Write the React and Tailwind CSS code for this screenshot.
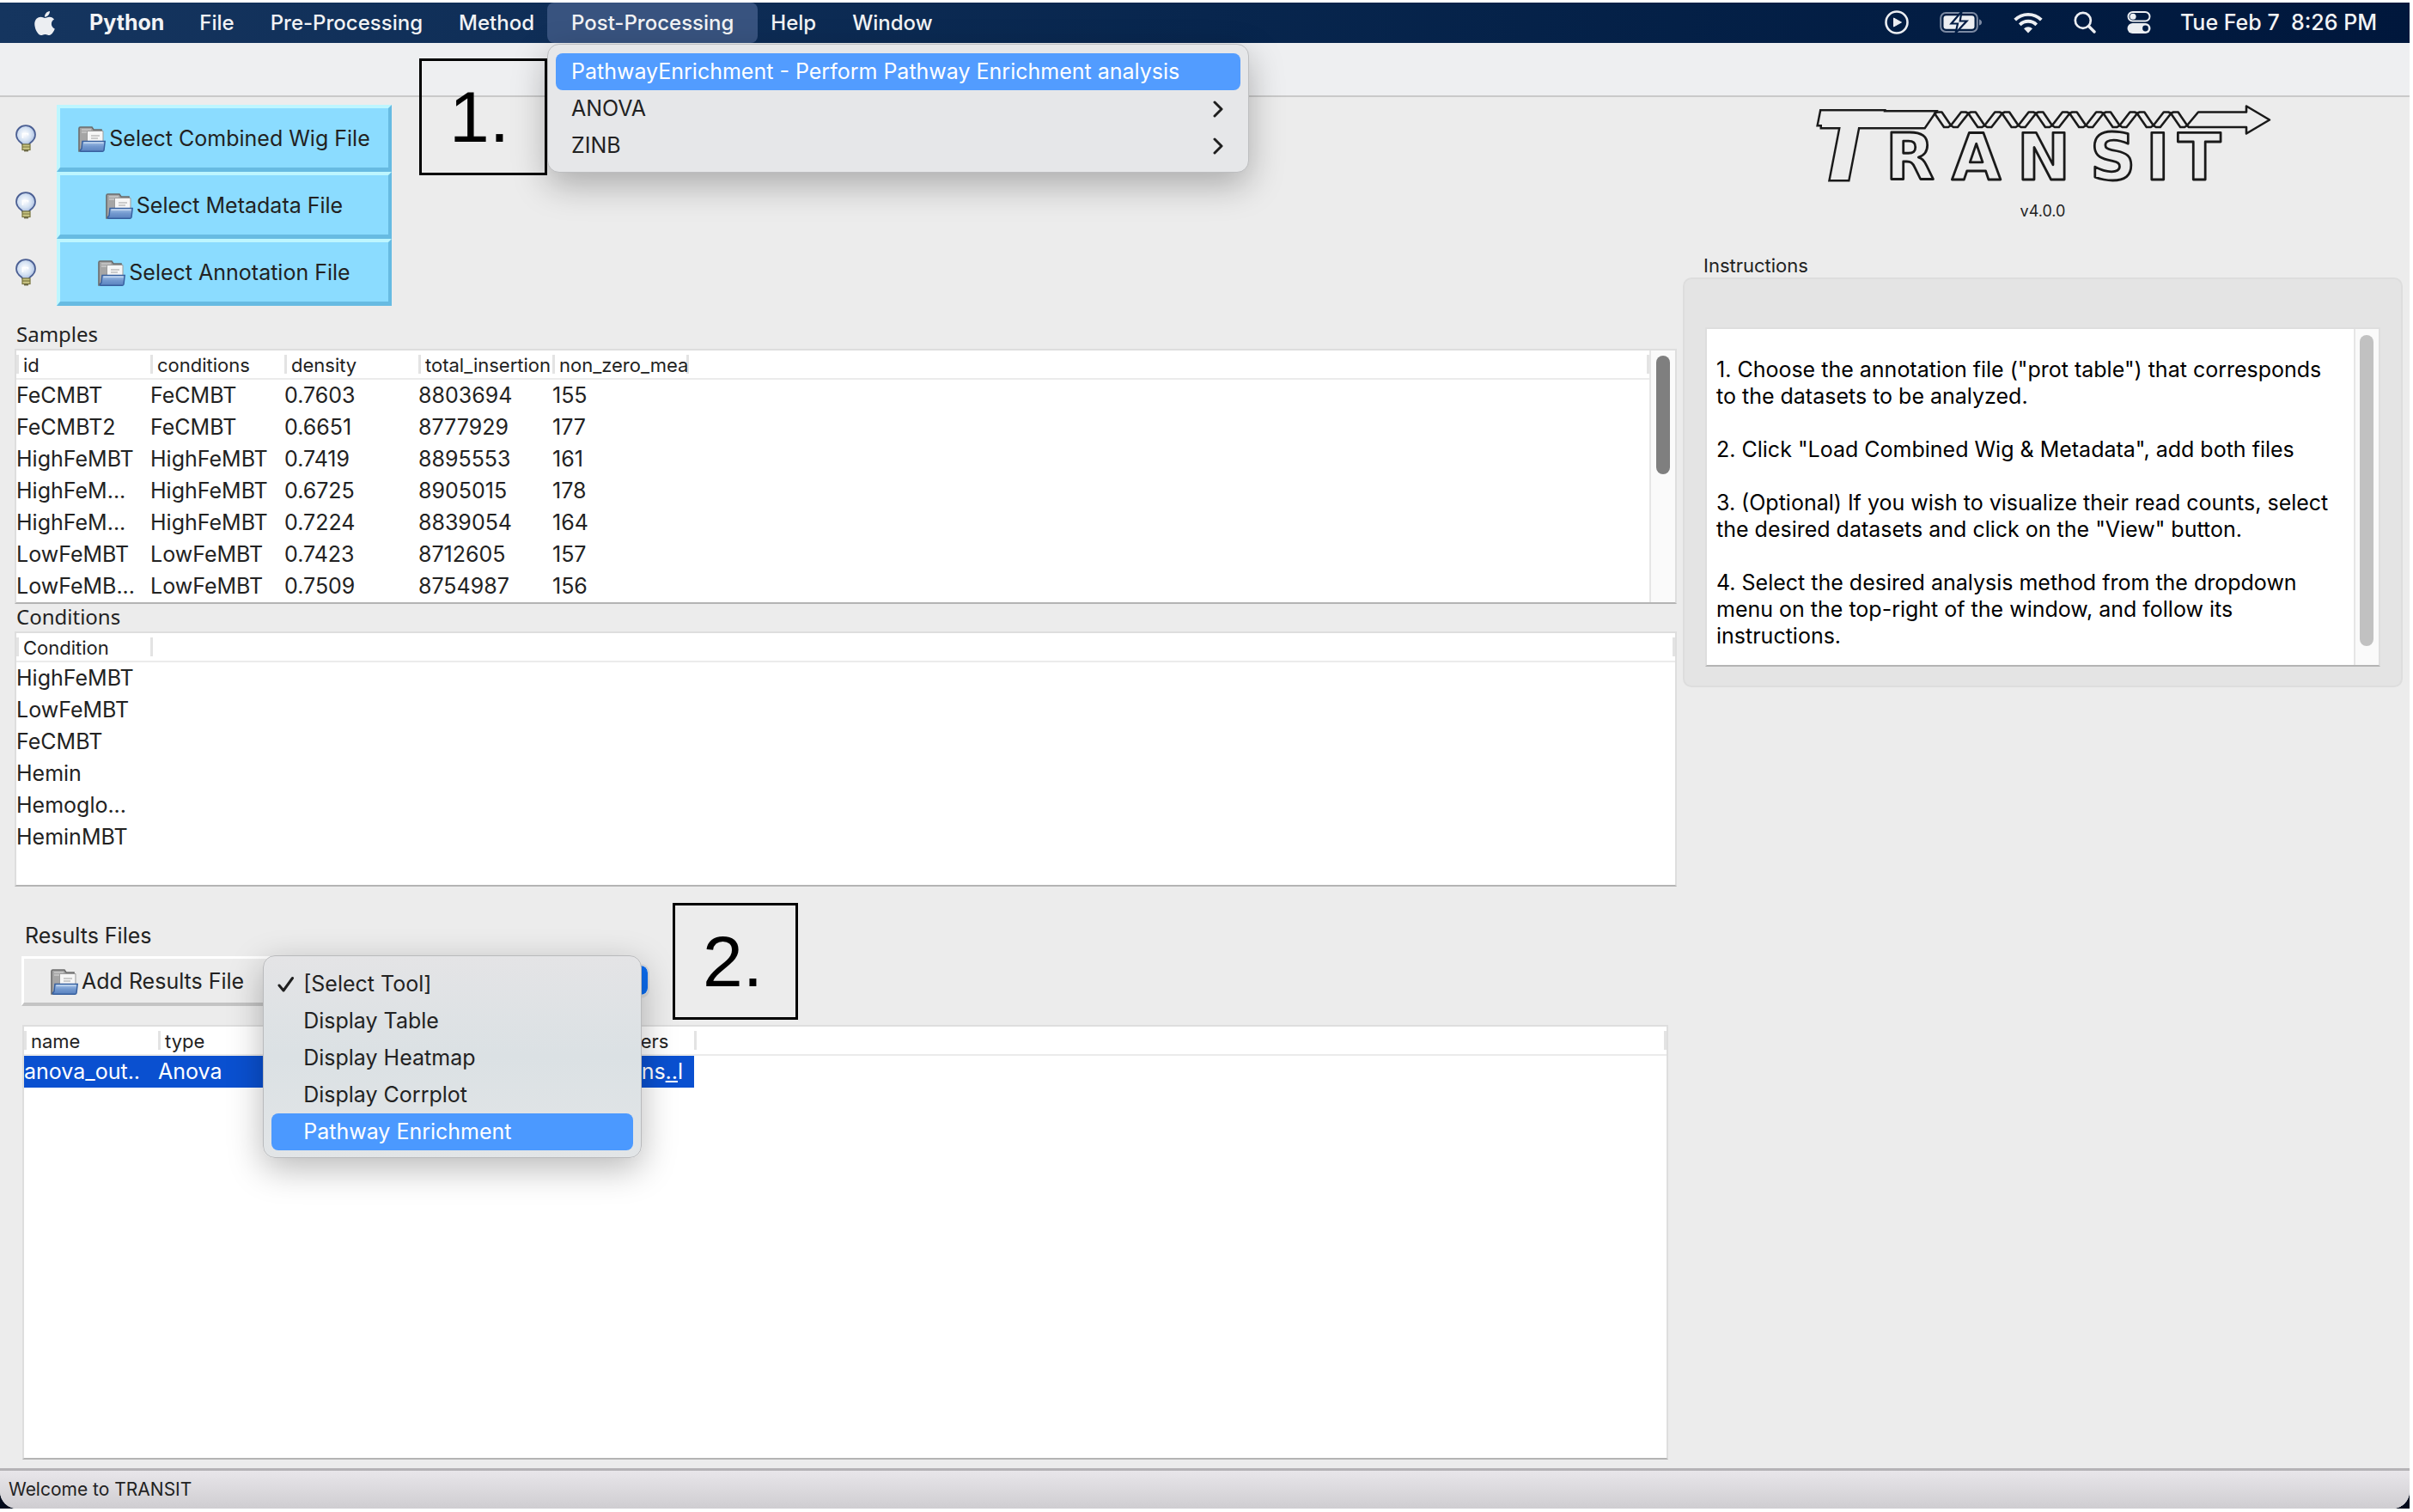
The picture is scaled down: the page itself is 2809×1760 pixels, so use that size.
import React from "react";
import { FaApple } from "react-icons/fa";

const SAMPLES = [
  ["FeCMBT", "FeCMBT", "0.7603", "8803694", "155"],
  ["FeCMBT2", "FeCMBT", "0.6651", "8777929", "177"],
  ["HighFeMBT", "HighFeMBT", "0.7419", "8895553", "161"],
  ["HighFeM...", "HighFeMBT", "0.6725", "8905015", "178"],
  ["HighFeM...", "HighFeMBT", "0.7224", "8839054", "164"],
  ["LowFeMBT", "LowFeMBT", "0.7423", "8712605", "157"],
  ["LowFeMB...", "LowFeMBT", "0.7509", "8754987", "156"],
];
const CONDITIONS = ["HighFeMBT", "LowFeMBT", "FeCMBT", "Hemin", "Hemoglo...", "HeminMBT"];
const TOOLS = ["[Select Tool]", "Display Table", "Display Heatmap", "Display Corrplot", "Pathway Enrichment"];

function Bulb() {
  return (
    <svg viewBox="0 0 24 32" className="h-8 w-6 shrink-0" aria-hidden="true">
      <defs>
        <radialGradient id="glass" cx="0.45" cy="0.45" r="0.6">
          <stop offset="0" stopColor="#ffffff" />
          <stop offset="0.55" stopColor="#d5e2f3" />
          <stop offset="1" stopColor="#a3b8dc" />
        </radialGradient>
      </defs>
      <path d="M12 1.2C5.8 1.2 1 5.8 1 11.8c0 4.600 2.900 7.600 5.900 9.700.8.6 1.300 1.300 1.600 2.200h7c.3-.9.8-1.600 1.600-2.200 3-2.100 5.900-5.100 5.900-9.700C23 5.800 18.200 1.200 12 1.200z" fill="url(#glass)" stroke="#4b5f93" strokeWidth="1.800" />
      <path d="M8.500 16v-5.500h6v2" fill="none" stroke="#fff" strokeWidth="1.600" />
      <rect x="8" y="23" width="9" height="6.500" fill="#c9c583" stroke="#77733c" strokeWidth="1.200" />
      <path d="M8 26h9" stroke="#77733c" strokeWidth="1.200" />
      <rect x="10" y="29" width="5" height="2.400" fill="#6d6a45" />
    </svg>
  );
}

function Folder() {
  return (
    <svg viewBox="0 0 32 30" className="h-[30px] w-8 shrink-0" aria-hidden="true">
      <defs>
        <linearGradient id="flap" x1="0" y1="0" x2="0" y2="1">
          <stop offset="0" stopColor="#a9c6ea" />
          <stop offset="0.5" stopColor="#7399cf" />
          <stop offset="1" stopColor="#5a82bf" />
        </linearGradient>
      </defs>
      <path d="M1 29V2.500Q1 1 2.500 1H16l2 3h9v25z" fill="#a5a5a5" stroke="#6b6b6b" strokeWidth="1.600" />
      <path d="M4 4h11M4 7h8" stroke="#c9c9c9" strokeWidth="1.600" />
      <path d="M10.500 5.500H29V24H10.500z" fill="#f6f6f6" stroke="#9b9b9b" />
      <path d="M15 11h10M15 14h8" stroke="#bdbdbd" strokeWidth="1.400" />
      <path d="M5 17.500h26.200L30 28q-.2 1.200-1.500 1.200H3.500q-1.500 0-1-1.500L4 26z" fill="url(#flap)" stroke="#37609f" strokeWidth="1.500" />
      <path d="M6.500 19.200h23" stroke="#cfe0f5" strokeWidth="1.200" />
    </svg>
  );
}

function Chevron() {
  return (
    <svg viewBox="0 0 12 20" className="h-5 w-3" aria-hidden="true">
      <path d="M2 2l8 8-8 8" fill="none" stroke="#1f1f1f" strokeWidth="3" strokeLinecap="round" strokeLinejoin="round" />
    </svg>
  );
}

function PlayIcon() {
  return (
    <svg viewBox="0 0 28 28" className="size-7" aria-hidden="true">
      <circle cx="14" cy="14" r="12.500" fill="none" stroke="#eceef2" strokeWidth="2.600" />
      <path d="M10.500 9v10l9-5z" fill="#eceef2" stroke="#eceef2" strokeLinejoin="round" />
    </svg>
  );
}

function BatteryIcon() {
  return (
    <svg viewBox="0 0 50 28" className="h-7 w-[50px]" aria-hidden="true">
      <rect x="1.200" y="3" width="42.600" height="22" rx="6" fill="none" stroke="#7c8aa3" strokeWidth="2" />
      <path d="M46 10.500q3 1 3 3.500t-3 3.500z" fill="#7c8aa3" />
      <rect x="4.500" y="6.300" width="36" height="15.400" rx="3" fill="#eceef2" />
      <path d="M25.500 1.500L13.500 15.500h7.500L18.500 26.500 31.500 12.500h-7.800z" fill="#eceef2" stroke="#001c44" strokeWidth="2.200" />
    </svg>
  );
}

function WifiIcon() {
  return (
    <svg viewBox="0 0 34 26" className="h-[26px] w-[34px]" aria-hidden="true">
      <g fill="none" stroke="#eceef2" strokeWidth="3.800">
        <path d="M1.700 10.200a21.600 21.600 0 0 1 30.600 0" />
        <path d="M7.300 15.800a13.700 13.700 0 0 1 19.400 0" />
      </g>
      <path d="M17 25.500l-5-5.200a7.200 7.200 0 0 1 10 0z" fill="#eceef2" />
    </svg>
  );
}

function SearchIcon() {
  return (
    <svg viewBox="0 0 26 26" className="size-[26px]" aria-hidden="true">
      <circle cx="10.800" cy="10.800" r="9" fill="none" stroke="#eceef2" strokeWidth="2.700" />
      <path d="M17.500 17.500l6.500 6.500" stroke="#eceef2" strokeWidth="3.400" strokeLinecap="round" />
    </svg>
  );
}

function ControlIcon() {
  return (
    <svg viewBox="0 0 28 28" className="size-7" aria-hidden="true">
      <rect x="1.500" y="2" width="25" height="10.500" rx="5.250" fill="none" stroke="#eceef2" strokeWidth="2" />
      <circle cx="7" cy="7.250" r="3.600" fill="#eceef2" />
      <rect x="0.500" y="15" width="27" height="12" rx="6" fill="#eceef2" />
      <circle cx="21.500" cy="21" r="3.400" fill="#001c44" />
    </svg>
  );
}

const DOWN = [0, 1, 2, 3, 4, 5, 6, 7];
const UP = [0, 1, 2, 3, 4, 5, 6];
const BAR = "M11 20.500H142L130 38H11z";

function Logo() {
  const letter = { fontFamily: '"DejaVu Sans", sans-serif', fontWeight: 700 };
  return (
    <svg viewBox="0 3 536 117" className="h-[117px] w-[536px]" role="img" aria-label="TRANSIT">
      <g fill="#ececec" stroke="#1a1a1a" strokeWidth="5">
        <path d={BAR} />
        <text x="2" y="99" fontSize="108" fontStyle="italic" style={letter}>T</text>
      </g>
      <g fill="#ececec">
        <path d={BAR} />
        <text x="2" y="99" fontSize="108" fontStyle="italic" style={letter}>T</text>
      </g>
      <g fill="none" stroke="#1a1a1a" strokeWidth="2.600" strokeLinejoin="round">
        {DOWN.map((n) => (
          <path key={n} d="M142 22l3-1.500h5.500L161 36l-3 2h-5z" transform={`translate(${n * 39.3} 0)`} />
        ))}
        {UP.map((n) => (
          <path key={n} d="M161 36l3 2h5l12.500-16-3-1.500h-5.500z" transform={`translate(${n * 39.3} 0)`} />
        ))}
        <path d="M436 36L449 20.500h56V13.500l27 16-27 16V38H438z" />
      </g>
      <text x="85 162 238 323 388 425" y="99" fontSize="74" fill="#ececec" stroke="#1a1a1a" strokeWidth="2.800" strokeLinejoin="round" style={letter}>
        RANSIT
      </text>
    </svg>
  );
}

function HeadCell({ children, last }) {
  return (
    <th className="h-[33px] p-0 text-left font-normal">
      <div className={"h-[22px] whitespace-nowrap border-l-[3px] border-[#e3e3e3] pl-[5px] text-[22px] leading-[25px] " + (last ? "border-r-[3px]" : "")}>
        {children}
      </div>
    </th>
  );
}

function DataTable({ label, heads, rows, selected }) {
  return (
    <table className="w-full table-fixed border-collapse" aria-label={label}>
      <colgroup>
        {heads.map((h, i) => <col key={i} className="w-[156px]" />)}
        <col />
      </colgroup>
      <thead>
        <tr className="border-b-2 border-[#ebebeb]">
          {heads.map((h, i) => <HeadCell key={i}>{h}</HeadCell>)}
          <HeadCell last />
        </tr>
      </thead>
      <tbody>
        {rows.map((r, i) => (
          <tr key={i}>
            {r.map((c, j) => (
              <td key={j} className={"h-[37px] whitespace-nowrap p-0 leading-[37px] " + (selected ? "bg-[#0a50d0] text-white" : "")}>{c}</td>
            ))}
            <td />
          </tr>
        ))}
      </tbody>
    </table>
  );
}

const frame = "border-2 border-[#dedede] border-b-[#b4b4b4] bg-white ";

function FileButton({ children }) {
  return (
    <div className="flex items-center gap-6 pl-[18px]">
      <Bulb />
      <button className="flex h-[78px] w-[390px] items-center justify-center gap-1 border-4 border-b-[5px] border-[#67bbe2] border-l-[#bdf6ff] border-t-[#bdf6ff] bg-[#8bdcff] pt-0.5">
        <Folder />
        {children}
      </button>
    </div>
  );
}

function MenuButton({ children }) {
  return <button className="h-full px-[21px]">{children}</button>;
}

function MenuBar() {
  return (
    <header className="relative z-20 flex h-[47px] items-center justify-between bg-linear-to-r from-[#15355f] via-[#08264e] to-[#00173c] text-2xl font-medium text-[#f2f3f5]">
      <nav className="flex h-full items-center">
        <button className="flex h-full items-center pl-9 pr-[18px]" aria-label="Apple menu">
          <FaApple className="size-8 text-[#eceef2]" />
        </button>
        <button className="h-full pl-[18px] pr-5 text-[25px] font-bold">Python</button>
        <MenuButton>File</MenuButton>
        <MenuButton>Pre-Processing</MenuButton>
        <MenuButton>Method</MenuButton>
        <div className="relative -mx-1.5 h-full">
          <button className="h-full rounded-lg bg-[#38537f] px-7">Post-Processing</button>
          <div role="menu" className="absolute left-0 top-12 w-[817px] rounded-[14px] border border-[#bdbec0] bg-[#e6e7e9] px-[9px] pb-[9px] pt-[10px] text-[25px] font-normal text-[#222] shadow-[0_14px_40px_rgba(0,0,0,0.28)]">
            <button role="menuitem" className="flex h-[43px] w-full items-center whitespace-nowrap rounded-lg bg-[#529cff] px-[18px] text-white">
              PathwayEnrichment - Perform Pathway Enrichment analysis
            </button>
            <button role="menuitem" className="flex h-[43px] w-full items-center justify-between px-[18px] pr-5">
              ANOVA <Chevron />
            </button>
            <button role="menuitem" className="flex h-[43px] w-full items-center justify-between px-[18px] pr-5">
              ZINB <Chevron />
            </button>
          </div>
        </div>
        <MenuButton>Help</MenuButton>
        <MenuButton>Window</MenuButton>
      </nav>
      <div className="flex items-center pr-[38px]">
        <div className="mr-[34px] flex items-center gap-[36px]">
          <PlayIcon />
          <BatteryIcon />
          <WifiIcon />
          <SearchIcon />
          <ControlIcon />
        </div>
        <time className="whitespace-pre text-[25px]">Tue Feb 7  8:26 PM</time>
      </div>
    </header>
  );
}

function ToolSelect() {
  return (
    <div className="relative">
      <div className="flex h-10 w-[438px] overflow-hidden rounded-[10px] border-2 border-b-4 border-[#dcdcdc] bg-white">
        <select aria-label="Tool" className="w-full appearance-none bg-transparent px-4 text-transparent" defaultValue="">
          <option value="" aria-label="None" />
          {TOOLS.map((t) => <option key={t}>{t}</option>)}
        </select>
        <span className="w-8 shrink-0 rounded-lg bg-[#0a6cf0]" />
      </div>
      <ul role="listbox" aria-label="Tools" className="absolute -left-3 -top-2.5 z-10 w-[441px] rounded-[14px] border border-[#b9babc] bg-linear-to-b from-[#e4e4e6] via-[#dbe1e4] to-[#e2e5e7] px-[9px] pb-2 pt-[11px] shadow-[0_12px_40px_rgba(0,0,0,0.28)]">
        {TOOLS.map((t, i) => (
          <li key={t} role="option" aria-selected={i === 0} className={"flex h-[43px] items-center rounded-lg pl-[7px] " + (i === 4 ? "bg-[#4b99ff] text-white" : "")}>
            <span className="w-[30px]">
              {i === 0 && (
                <svg viewBox="0 0 20 20" className="size-5" aria-hidden="true">
                  <path d="M2 11l5 6L17.500 2.500" fill="none" stroke="#1f1f1f" strokeWidth="3" strokeLinecap="round" strokeLinejoin="round" />
                </svg>
              )}
            </span>
            {t}
          </li>
        ))}
      </ul>
    </div>
  );
}

function Callout({ children, className }) {
  return (
    <div className={"absolute z-30 h-[136px] border-[3px] border-black pl-8 font-['Liberation_Sans',sans-serif] text-[84px] leading-[130px] text-black " + className}>
      {children}
    </div>
  );
}

export default function App() {
  return (
    <div className="relative flex min-h-screen flex-col bg-white pb-1 pr-1 pt-[3px] font-['Inter',sans-serif] text-[25px] text-[#222]">
      <MenuBar />
      <div className="flex flex-1 flex-col bg-[#020a1c]">
        <div className="flex flex-1 flex-col overflow-hidden rounded-b-[20px] bg-[#ececec]">
          <div className="h-[63px] border-b-2 border-[#c9c9c9] bg-[#eeeff1]" />
          <main className="flex flex-1">
            <div className="flex min-w-0 flex-1 flex-col pb-2.5 pl-[17px] pr-[7px] pt-[9px]">
              <div className="-ml-[17px]">
                <FileButton>Select Combined Wig File</FileButton>
                <FileButton>Select Metadata File</FileButton>
                <FileButton>Select Annotation File</FileButton>
              </div>
              <h2 className="mt-[18px] h-8 pl-0.5 font-['Noto_Sans',sans-serif] text-2xl leading-[30px]">Samples</h2>
              <div className={"flex h-[297px] " + frame}>
                <div className="min-w-0 flex-1">
                  <DataTable label="Samples" heads={["id", "conditions", "density", "total_insertion", "non_zero_mea"]} rows={SAMPLES} />
                </div>
                <div className="w-[30px] border-l-2 border-[#e6e6e6] bg-[#fafafa] pl-[6px] pt-[6px]">
                  <div className="h-[138px] w-4 rounded-full bg-[#7f7f7f]" />
                </div>
              </div>
              <h2 className="h-8 pl-0.5 font-['Noto_Sans',sans-serif] text-2xl leading-[30px]">Conditions</h2>
              <div className={"h-[297px] " + frame}>
                <DataTable label="Conditions" heads={["Condition"]} rows={CONDITIONS.map((c) => [c])} />
              </div>
              <h2 className="mt-[41px] h-8 pl-3 leading-8">Results Files</h2>
              <div className="mt-[8px] flex items-center pl-2">
                <button className="flex h-[58px] items-center gap-1 whitespace-nowrap border-[3px] border-b-4 border-[#c4c4c4] border-l-white border-t-white px-[31px] pt-0.5">
                  <Folder />
                  Add Results File
                </button>
                <ToolSelect />
              </div>
              <div className={"ml-[9px] mr-[10px] mt-[22px] flex-1 " + frame}>
                <DataTable
                  label="Results files"
                  heads={["name", "type", "", "", "parameters"]}
                  rows={[["anova_out..", "Anova", "", "", <>conditions<span className="underline">..</span>l</>]]}
                  selected
                />
              </div>
            </div>
            <aside className="flex w-[846px] shrink-0 flex-col pr-2">
              <div className="flex flex-col items-center">
                <Logo />
                <p className="mt-1 text-lg leading-6">v4.0.0</p>
              </div>
              <h2 className="mt-[38px] pl-6 text-[22px] leading-[26px]">Instructions</h2>
              <section className="mt-px rounded-[10px] border-2 border-[#dddddd] bg-[#e4e4e4] px-6 pb-[22px] pt-14">
                <div className={"flex " + frame}>
                  <div className="min-h-[391px] flex-1 space-y-[31px] pl-[11px] pr-4 pt-8 leading-[31px] text-black">
                    <p>1. Choose the annotation file ("prot table") that corresponds to the datasets to be analyzed.</p>
                    <p>2. Click "Load Combined Wig &amp; Metadata", add both files</p>
                    <p>3. (Optional) If you wish to visualize their read counts, select the desired datasets and click on the "View" button.</p>
                    <p>4. Select the desired analysis method from the dropdown menu on the top-right of the window, and follow its instructions.</p>
                  </div>
                  <div className="w-[29px] border-l-2 border-[#e6e6e6] bg-[#fafafa] pl-[5px] pt-[7px]">
                    <div className="h-[362px] w-4 rounded-full bg-[#c1c1c1]" />
                  </div>
                </div>
              </section>
            </aside>
          </main>
          <footer className="h-[47px] border-t-[3px] border-[#b5b3b6] bg-linear-to-b from-[#e8e6ea] to-[#cfcdd1] pl-[10px] text-[21px] leading-[44px]">
            Welcome to TRANSIT
          </footer>
        </div>
      </div>
      <Callout className="left-[488px] top-[68px] w-[149px]">1.</Callout>
      <Callout className="left-[783px] top-[1051px] w-[146px]">2.</Callout>
    </div>
  );
}
